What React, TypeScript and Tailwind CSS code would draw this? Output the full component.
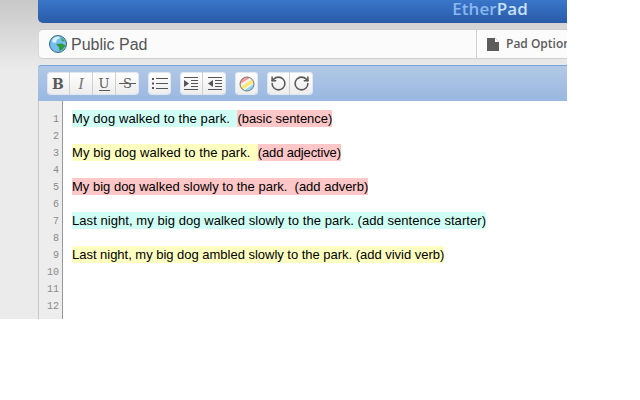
import { RotateCcw, RotateCw } from "lucide-react";

const lines = [
  [["My dog walked to the park.  ", "bg-[#d0fff6] tracking-[0.1px]"], ["(basic sentence)", "bg-[#ffc7c7] tracking-[-0.03px]"]],
  [],
  [["My big dog walked to the park.  ", "bg-[#ffffc2] tracking-[0.07px]"], ["(add adjective)", "bg-[#ffc7c7] tracking-[-0.15px]"]],
  [],
  [["My big dog walked slowly to the park.  (add adverb)", "bg-[#ffc7c7]"]],
  [],
  [["Last night, my big dog walked slowly to the park. (add sentence starter)", "bg-[#d0fff6] tracking-[0.06px]"]],
  [],
  [["Last night, my big dog ambled slowly to the park. (add vivid verb)", "bg-[#ffffc2] tracking-[-0.02px]"]],
  [],
  [],
  [],
];

function ToolButton({ children, last }: { children: React.ReactNode; last?: boolean }) {
  return (
    <div
      className={
        "relative flex h-[23px] w-[23px] items-center justify-center text-[#5a5a5a] " +
        (last ? "" : "border-r border-[#cfcfcf]")
      }
    >
      {children}
    </div>
  );
}

function ToolGroup({ children }: { children: React.ReactNode }) {
  return (
    <div className="flex overflow-hidden rounded-[4px] bg-gradient-to-b from-[#fff] to-[#ececec] shadow-[inset_0_0_0_1px_#dfe6f0,inset_0_-1px_0_#7f9cc8]">
      {children}
    </div>
  );
}

function Globe() {
  return (
    <svg width="18" height="18" viewBox="0 0 18 18">
      <circle cx="9" cy="9" r="8.5" fill="#74bdf0" stroke="#356a78" />
      <path d="M4 3.5 Q7 1 10 1.5 L11 3 L8 4.5 L7 7.5 L4.5 8 L3 6 Z" fill="#d9f0fb" />
      <path d="M7 9 L13 8.5 L16.5 10.5 L13.5 14.5 L10.5 16 L10 12.5 Z" fill="#2f9a3c" />
      <path d="M12 2.5 L16 6 L13 6.5 Z" fill="#39a048" />
    </svg>
  );
}

export default function App() {
  return (
    <div className="h-[400px] w-[640px] overflow-hidden bg-white font-['Liberation_Sans',sans-serif]">
      <div className="flex h-[319px] w-[567px] flex-col overflow-hidden bg-[#ebebeb] bg-gradient-to-b from-[#c8c8c8] from-0% to-[#ebebeb] to-[22%] pl-[38px]">
        <div className="flex h-[23px] shrink-0 items-start justify-end rounded-bl-[5px] bg-gradient-to-b from-[#3a76ca] to-[#2a5ba8] pr-[39px]">
          <span className="mt-[-1px] font-['Open_Sans',sans-serif] text-[17px] leading-[20px] font-semibold tracking-[0.1px]">
            <span className="text-[#8ab8ee]">Ether</span>
            <span className="text-[#c9e0fa]">Pad</span>
          </span>
        </div>

        <div className="mt-[6px] flex h-[30px] shrink-0 rounded-l-[5px] border-y border-l border-y-[#cfcfcf] border-l-[#d8d8d8] bg-[#fbfbfb]">
          <div className="flex flex-1 items-center gap-[4px] pl-[10px]">
            <Globe />
            <span className="mt-[2px] text-[16px] leading-none text-[#555]">Public Pad</span>
          </div>
          <div className="flex w-[91px] items-center gap-[7px] border-l border-[#cfcfcf] pl-[10px]">
            <svg width="12" height="13" viewBox="0 0 12 13" className="shrink-0">
              <path d="M0 0H8L12 4V13H0Z" fill="#5c5c5c" />
              <path d="M8 0V4H12Z" fill="#fff" />
            </svg>
            <span className="font-['Open_Sans',sans-serif] text-[12px] leading-none font-semibold whitespace-nowrap text-[#5c5c5c]">
              Pad Options
            </span>
          </div>
        </div>

        <div className="mt-[6px] flex h-[36px] shrink-0 items-center gap-[9px] rounded-tl-[3px] border-t border-[#7ba3dd] bg-gradient-to-b from-[#b1c9e6] to-[#99b7e0] pl-[9px]">
          <ToolGroup>
            <ToolButton>
              <span className="font-['DejaVu_Serif',serif] text-[14px] leading-none font-bold">B</span>
            </ToolButton>
            <ToolButton>
              <span className="font-['Liberation_Serif',serif] text-[16px] leading-none text-[#777] italic">I</span>
            </ToolButton>
            <ToolButton>
              <span className="font-['DejaVu_Serif',serif] text-[13px] leading-none">U</span>
              <span className="absolute top-[18px] left-[6px] h-px w-[11px] bg-[#5a5a5a]" />
            </ToolButton>
            <ToolButton last>
              <span className="font-['DejaVu_Serif',serif] text-[13px] leading-none">S</span>
              <span className="absolute top-[11px] left-[3px] h-px w-[17px] bg-[#5a5a5a]" />
            </ToolButton>
          </ToolGroup>
          <ToolGroup>
            <ToolButton last>
              <svg width="16" height="13" viewBox="0 0 16 13" fill="#555">
                <rect x="0" y="1" width="2" height="2" />
                <rect x="0" y="5.5" width="2" height="2" />
                <rect x="0" y="10" width="2" height="2" />
                <rect x="4" y="1" width="12" height="1" />
                <rect x="4" y="6" width="12" height="1" />
                <rect x="4" y="11" width="12" height="1" />
              </svg>
            </ToolButton>
          </ToolGroup>
          <ToolGroup>
            <ToolButton>
              <svg width="14" height="13" viewBox="0 0 14 13" fill="#555">
                <rect x="0" y="0" width="14" height="1" />
                <path d="M0 3L5 6.5L0 10Z" />
                <rect x="7" y="3" width="7" height="1" />
                <rect x="7" y="6" width="7" height="1" />
                <rect x="7" y="9" width="7" height="1" />
                <rect x="0" y="12" width="14" height="1" />
              </svg>
            </ToolButton>
            <ToolButton last>
              <svg width="14" height="13" viewBox="0 0 14 13" fill="#555">
                <rect x="0" y="0" width="14" height="1" />
                <path d="M5 3L0 6.5L5 10Z" />
                <rect x="7" y="3" width="7" height="1" />
                <rect x="7" y="6" width="7" height="1" />
                <rect x="7" y="9" width="7" height="1" />
                <rect x="0" y="12" width="14" height="1" />
              </svg>
            </ToolButton>
          </ToolGroup>
          <ToolGroup>
            <ToolButton last>
              <svg width="16" height="16" viewBox="0 0 16 16">
                <defs>
                  <clipPath id="c">
                    <circle cx="8" cy="8" r="7" />
                  </clipPath>
                </defs>
                <g clipPath="url(#c)">
                  <rect width="16" height="16" fill="#8fd8f5" />
                  <path d="M0 0H16L0 10Z" fill="#f79a92" />
                  <path d="M0 9L14 0H16V2L0 12Z" fill="#f4f4f4" />
                  <path d="M0 11.5L16 1.5V6.5L3 16H0Z" fill="#fbe77a" />
                  <path d="M3 14L16 6V7L4 15Z" fill="#f4f4f4" />
                </g>
                <circle cx="8" cy="8" r="7" fill="none" stroke="#777" />
              </svg>
            </ToolButton>
          </ToolGroup>
          <ToolGroup>
            <ToolButton>
              <RotateCcw size={17} strokeWidth={2.2} />
            </ToolButton>
            <ToolButton last>
              <RotateCw size={17} strokeWidth={2.2} />
            </ToolButton>
          </ToolGroup>
        </div>

        <div className="flex min-h-0 flex-1 border-l border-[#c8c8c8] bg-white">
          <div className="w-[24px] shrink-0 border-r border-[#999] bg-[#ededed] pt-[10px] pr-[3px] text-right font-['Liberation_Mono',monospace] text-[10px] text-[#8a8a8a]">
            {lines.map((_, i) => (
              <div key={i} className="h-[17px] leading-[17px]">
                {i + 1}
              </div>
            ))}
          </div>
          <div className="flex-1 pt-[9px] pl-[9px] text-[13px] text-black">
            {lines.map((line, i) => (
              <div key={i} className="flex h-[17px] whitespace-pre">
                {line.map(([text, color]) => (
                  <span key={text} className={"block h-[17px] leading-[17px] " + color}>
                    {text}
                  </span>
                ))}
              </div>
            ))}
          </div>
        </div>
      </div>
    </div>
  );
}
